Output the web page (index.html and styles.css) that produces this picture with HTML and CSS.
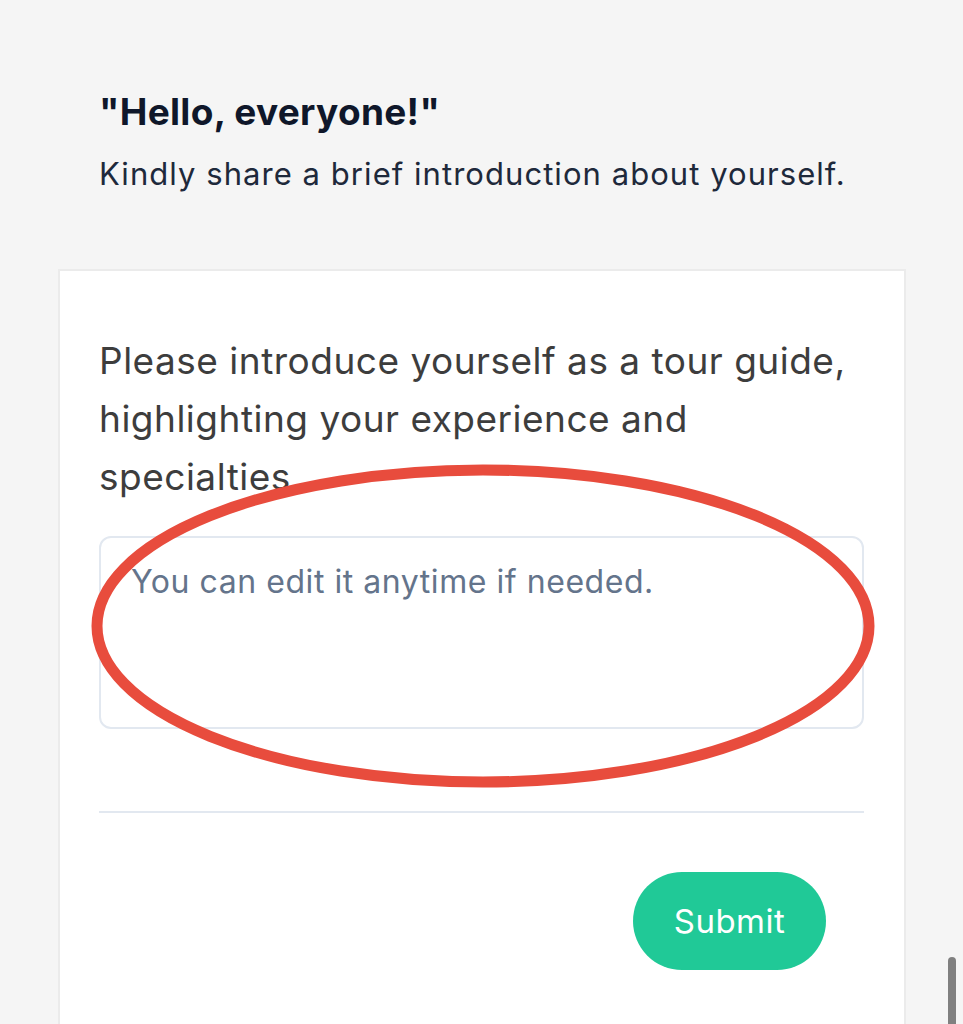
FILE: index.html
```html
<!DOCTYPE html>
<html lang="en">
<head>
<meta charset="utf-8">
<title>Introduction</title>
<link rel="stylesheet" href="styles.css">
</head>
<body>
<main class="page">
  <header class="intro">
    <h1 class="intro-title">"Hello, everyone!"</h1>
    <p class="intro-text">Kindly share a brief introduction about yourself.</p>
  </header>
  <section class="card">
    <label class="question" for="bio">Please introduce yourself as a tour guide, highlighting your experience and specialties</label>
    <textarea id="bio" class="answer" placeholder="You can edit it anytime if needed."></textarea>
    <hr class="divider">
    <div class="actions">
      <button class="submit" type="button">Submit</button>
    </div>
  </section>
</main>
<svg class="annotation" width="963" height="1024" viewBox="0 0 963 1024" aria-hidden="true">
  <ellipse cx="483" cy="626" rx="386" ry="156" fill="none" stroke="#e84c3d" stroke-width="11"/>
</svg>
<div class="scroll-thumb"></div>
</body>
</html>
```

FILE: styles.css
```css
* { box-sizing: border-box; }

html, body {
  margin: 0;
  padding: 0;
  background: #f5f5f5;
  font-family: Inter, "Noto Sans", "Liberation Sans", sans-serif;
  overflow: hidden;
  height: 1024px;
}

.page {
  padding: 0 57px 0 58px;
}

.intro {
  padding: 90px 41px 0 41px;
}

.intro-title {
  margin: 0;
  font-size: 37px;
  line-height: 44px;
  font-weight: 700;
  letter-spacing: 0.3px;
  color: #0f172a;
}

.intro-text {
  margin: 20px 0 0 0;
  font-size: 31px;
  line-height: 40px;
  letter-spacing: 1.05px;
  color: #1e293b;
}

.card {
  margin-top: 75px;
  background: #ffffff;
  border: 2px solid #ebebeb;
  padding: 61px 40px 200px 39px;
  display: flex;
  flex-direction: column;
}

.question {
  display: block;
  font-size: 37px;
  line-height: 58px;
  letter-spacing: 0.5px;
  color: #3d3d3d;
}

.answer {
  display: block;
  margin-top: 30px;
  width: 100%;
  height: 193px;
  border: 2px solid #e2e8f0;
  border-radius: 12px;
  padding: 20px 30px;
  font-family: Inter, "Noto Sans", "Liberation Sans", sans-serif;
  font-size: 32px;
  line-height: 48px;
  letter-spacing: 0.55px;
  color: #334155;
  resize: none;
  outline: none;
  background: #ffffff;
}

.answer::placeholder {
  color: #64748b;
  opacity: 1;
}

.divider {
  margin: 82px 0 0 0;
  border: 0;
  height: 2px;
  background: #e2e8f0;
}

.actions {
  display: flex;
  justify-content: flex-end;
  padding-right: 38px;
  margin-top: 59px;
}

.submit {
  width: 193px;
  height: 98px;
  border: 0;
  border-radius: 49px;
  background: #20c997;
  color: #ffffff;
  font-family: Inter, "Noto Sans", "Liberation Sans", sans-serif;
  font-size: 33px;
  font-weight: 400;
  letter-spacing: 0.5px;
}

.annotation {
  position: absolute;
  left: 0;
  top: 0;
  pointer-events: none;
}

.scroll-thumb {
  position: fixed;
  right: 7px;
  top: 957px;
  width: 8px;
  height: 90px;
  border-radius: 4px;
  background: #808080;
}
```
